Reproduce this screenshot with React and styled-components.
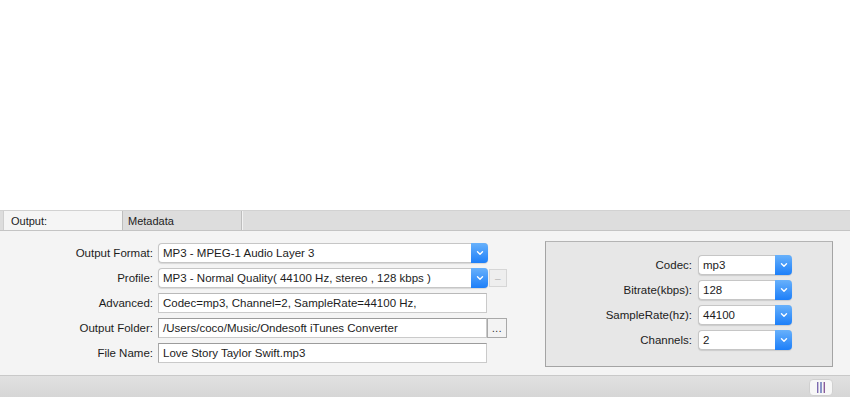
import React from "react";
import styled, { createGlobalStyle } from "styled-components";

const GlobalStyle = createGlobalStyle`
  html, body {
    margin: 0;
    padding: 0;
    background: #ffffff;
  }
  #root {
    height: 397px;
  }
`;

const Window = styled.div`
  display: flex;
  flex-direction: column;
  width: 850px;
  height: 397px;
  font-family: "Liberation Sans", Arial, sans-serif;
  font-size: 11.5px;
  color: #1c1c1c;
`;

const Blank = styled.div`
  height: 210px;
  background: #ffffff;
`;

const TabBar = styled.div`
  display: flex;
  height: 19px;
  background: #dddddd;
  border-top: 1px solid #d2d2d2;
  border-bottom: 1px solid #c4c4c4;
  padding-left: 3px;
`;

const Tab = styled.div`
  width: ${p => p.$width}px;
  padding-left: ${p => p.$pad}px;
  box-sizing: border-box;
  display: flex;
  align-items: center;
  font-size: 11px;
  background: ${p => (p.$active ? "#f5f5f5" : "transparent")};
  border-left: ${p => (p.$active ? "1px solid #cfcfcf" : "none")};
  border-right: 1px solid #bdbdbd;
  box-shadow: ${p => (p.$active ? "none" : "1px 0 0 #f2f2f2")};
`;

const Content = styled.div`
  flex: 1;
  display: flex;
  align-items: flex-start;
  background: #f4f4f4;
`;

const Form = styled.div`
  display: grid;
  grid-template-columns: 153px 330px auto;
  grid-auto-rows: 20px;
  column-gap: 5px;
  row-gap: 5px;
  padding-top: 12px;
  align-items: center;
`;

const Label = styled.div`
  text-align: right;
  white-space: nowrap;
`;

const SelectBox = styled.div`
  display: flex;
  height: 20px;
  box-sizing: border-box;
  background: #ffffff;
  border: 1px solid #c6c6c6;
  border-right: none;
  border-radius: 4px;
  box-shadow: 0 1px 1px rgba(0, 0, 0, 0.12);
`;

const SelectText = styled.div`
  flex: 1;
  display: flex;
  align-items: center;
  padding-left: 4px;
  white-space: nowrap;
  overflow: hidden;
`;

const SelectArrow = styled.div`
  width: 17px;
  margin-top: -1px;
  margin-bottom: -1px;
  display: flex;
  align-items: center;
  justify-content: center;
  background: linear-gradient(#68b1fb, #1d7ff9);
  border-radius: 0 4px 4px 0;
`;

const TextField = styled.div`
  height: 20px;
  width: 329px;
  box-sizing: border-box;
  display: flex;
  align-items: center;
  padding-left: 4px;
  background: #ffffff;
  border: 1px solid #cacaca;
  border-top-color: ${p => (p.$dark ? "#9c9c9c" : "#b9b9b9")};
  border-left-color: ${p => (p.$dark ? "#a8a8a8" : "#cacaca")};
  white-space: nowrap;
`;

const SmallButton = styled.div`
  width: ${p => p.$size}px;
  height: ${p => p.$size}px;
  box-sizing: border-box;
  margin-left: ${p => p.$ml}px;
  display: flex;
  align-items: center;
  justify-content: center;
  background: ${p => (p.$disabled ? "#eeeeee" : "#f3f3f3")};
  border: 1px solid ${p => (p.$disabled ? "#d6d6d6" : "#a9a9a9")};
  color: ${p => (p.$disabled ? "#b8b8b8" : "#222")};
  font-size: 10px;
  letter-spacing: 0.5px;
`;

const GroupBox = styled.div`
  margin-left: auto;
  margin-right: 17px;
  margin-top: 10px;
  width: 288px;
  height: 126px;
  box-sizing: border-box;
  background: #e7e7e7;
  border: 1px solid #a4a4a4;
  border-top-color: #b4b4b4;
  display: grid;
  grid-template-columns: 146px 94px;
  grid-auto-rows: 20px;
  column-gap: 6px;
  row-gap: 5px;
  align-content: start;
  align-items: center;
  padding-top: 13px;
`;

const StatusBar = styled.div`
  height: 21px;
  border-top: 1px solid #c9c9c9;
  background: linear-gradient(#e1e1e1, #d6d6d6);
  display: flex;
  align-items: center;
  justify-content: flex-end;
  padding-right: 17px;
`;

const StatusButton = styled.div`
  width: 24px;
  height: 17px;
  box-sizing: border-box;
  margin-top: 1px;
  background: #f7f7f7;
  border: 1px solid #d0d0d0;
  border-radius: 4px;
  display: flex;
  align-items: center;
  justify-content: center;
`;

const Chevron = () => (
  <svg width="8" height="6" viewBox="0 0 8 6">
    <path d="M1.5 1.8 L4 4.2 L6.5 1.8" fill="none" stroke="#ffffff" strokeWidth="1.4" strokeLinecap="round" strokeLinejoin="round" />
  </svg>
);

const Select = ({ value }) => (
  <SelectBox>
    <SelectText>{value}</SelectText>
    <SelectArrow>
      <Chevron />
    </SelectArrow>
  </SelectBox>
);

const Bars = () => (
  <svg width="10" height="11" viewBox="0 0 10 11">
    <rect x="1" y="0" width="1.4" height="11" fill="#7d6bb0" />
    <rect x="4.3" y="0" width="1.4" height="11" fill="#5c6cb5" />
    <rect x="7.6" y="0" width="1.4" height="11" fill="#8a5c9c" />
  </svg>
);

const audio = [
  ["Codec:", "mp3"],
  ["Bitrate(kbps):", "128"],
  ["SampleRate(hz):", "44100"],
  ["Channels:", "2"]
];

export default function App() {
  return (
    <Window>
      <GlobalStyle />
      <Blank />
      <TabBar>
        <Tab $active $width={120} $pad={7}>Output:</Tab>
        <Tab $width={119} $pad={5}>Metadata</Tab>
      </TabBar>
      <Content>
        <Form>
          <Label>Output Format:</Label>
          <Select value="MP3 - MPEG-1 Audio Layer 3" />
          <div />

          <Label>Profile:</Label>
          <Select value="MP3 - Normal Quality( 44100 Hz, stereo , 128 kbps )" />
          <SmallButton $disabled $size={18} $ml={-4}>–</SmallButton>

          <Label>Advanced:</Label>
          <TextField>Codec=mp3, Channel=2, SampleRate=44100 Hz,</TextField>
          <div />

          <Label>Output Folder:</Label>
          <TextField $dark>/Users/coco/Music/Ondesoft iTunes Converter</TextField>
          <SmallButton $size={20} $ml={-6}>...</SmallButton>

          <Label>File Name:</Label>
          <TextField $dark>Love Story Taylor Swift.mp3</TextField>
          <div />
        </Form>
        <GroupBox>
          {audio.map(([label, value]) => (
            <React.Fragment key={label}>
              <Label>{label}</Label>
              <Select value={value} />
            </React.Fragment>
          ))}
        </GroupBox>
      </Content>
      <StatusBar>
        <StatusButton>
          <Bars />
        </StatusButton>
      </StatusBar>
    </Window>
  );
}
